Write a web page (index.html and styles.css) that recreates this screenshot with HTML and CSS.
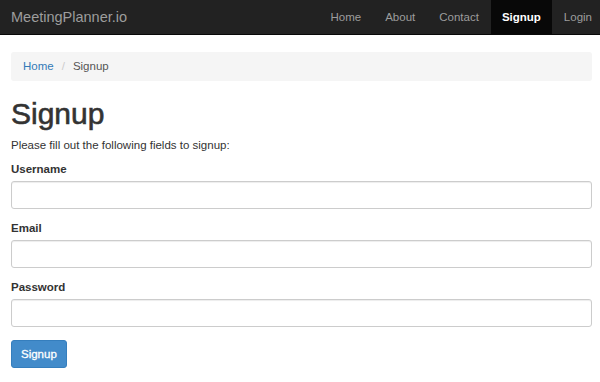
FILE: index.html
```html
<!DOCTYPE html>
<html lang="en">
<head>
  <meta charset="UTF-8">
  <meta name="viewport" content="width=device-width, initial-scale=1.0">
  <title>Signup</title>
  <link rel="stylesheet" href="styles.css">
</head>
<body>

  <nav class="navbar">
    <a class="brand" href="#">MeetingPlanner.io</a>
    <ul class="nav">
      <li><a href="#">Home</a></li>
      <li><a href="#">About</a></li>
      <li><a href="#">Contact</a></li>
      <li class="active"><a href="#">Signup</a></li>
      <li><a href="#">Login</a></li>
    </ul>
  </nav>

  <div class="container">
    <ul class="breadcrumb">
      <li><a href="#">Home</a></li>
      <li class="sep">/</li>
      <li>Signup</li>
    </ul>

    <h1>Signup</h1>
    <p class="lead-text">Please fill out the following fields to signup:</p>

    <form class="signup-form">
      <div class="form-group">
        <label for="username">Username</label>
        <input type="text" id="username">
      </div>
      <div class="form-group">
        <label for="email">Email</label>
        <input type="text" id="email">
      </div>
      <div class="form-group">
        <label for="password">Password</label>
        <input type="password" id="password">
      </div>
      <button type="submit" class="btn-primary">Signup</button>
    </form>
  </div>

</body>
</html>
```

FILE: styles.css
```css
body {
  font-family: "Liberation Sans", Arial, sans-serif;
  font-size: 11.5px;
  color: #333;
  margin: 0;
  background-color: #fff;
}

a {
  text-decoration: none;
}

.navbar {
  display: flex;
  justify-content: space-between;
  align-items: stretch;
  height: 34px;
  background-color: #222;
  border-bottom: 1px solid #080808;
  padding-left: 11px;
}

.navbar .brand {
  display: flex;
  align-items: center;
  color: #9d9d9d;
  font-size: 14.5px;
}

.nav {
  display: flex;
  list-style: none;
  margin: 0 -4px 0 0;
  padding: 0;
  font-size: 11.5px;
}

.nav li a {
  display: flex;
  align-items: center;
  height: 100%;
  padding: 0 12px;
  color: #9d9d9d;
}

.nav li.active a {
  background-color: #080808;
  color: #fff;
  font-weight: bold;
  padding: 0 11px;
}

.container {
  padding: 0 8px 0 11px;
}

.breadcrumb {
  display: flex;
  list-style: none;
  margin: 17px 0 0;
  padding: 7px 12px;
  height: 15px;
  line-height: 15px;
  background-color: #f5f5f5;
  border-radius: 3px;
  color: #555;
}

.breadcrumb a {
  color: #337ab7;
}

.breadcrumb .sep {
  color: #ccc;
  padding: 0 8px;
}

h1 {
  font-size: 30px;
  font-weight: normal;
  -webkit-text-stroke: 0.6px #333;
  margin: 16px 0 8px;
  line-height: 34px;
}

.lead-text {
  margin: 0 0 12px;
}

.form-group {
  margin-bottom: 13px;
}

.form-group label {
  display: block;
  font-weight: bold;
  margin-bottom: 6px;
}

.form-group input {
  display: block;
  box-sizing: border-box;
  width: 100%;
  height: 28px;
  border: 1px solid #ccc;
  border-radius: 3px;
  box-shadow: inset 0 1px 1px rgba(0, 0, 0, 0.075);
  font-size: 12px;
  padding: 4px 10px;
}

.btn-primary {
  font-family: inherit;
  font-size: 11.5px;
  color: #fff;
  -webkit-text-stroke: 0.3px #fff;
  background-color: #428bca;
  border: 1px solid #357ebd;
  border-radius: 3px;
  height: 28px;
  padding: 0 9px;
  cursor: pointer;
}
```
